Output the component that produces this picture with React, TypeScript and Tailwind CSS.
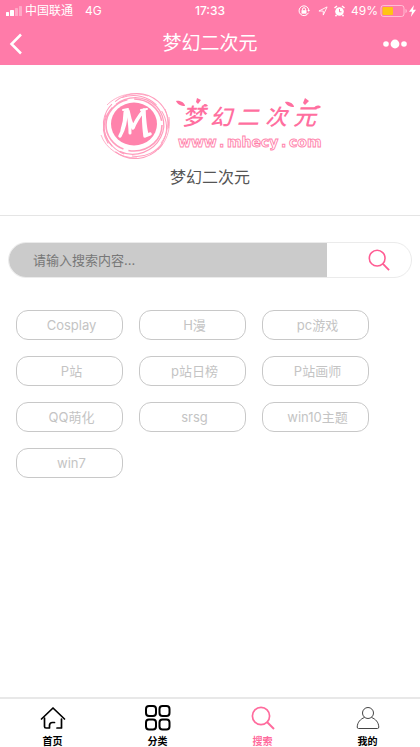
import React from 'react';

const tags = ['Cosplay', 'H漫', 'pc游戏', 'P站', 'p站日榜', 'P站画师', 'QQ萌化', 'srsg', 'win10主题', 'win7'];

function StatusBar() {
  return (
    <div className="grid h-[22px] grid-cols-[1fr_auto_1fr] items-center text-xs leading-5">
      <div className="flex items-center pl-1.5">
        <svg width="17" height="10" viewBox="0 0 17 10" fill="#fff" aria-hidden="true">
          <rect x="0" y="6" width="3" height="4" rx="0.6" />
          <rect x="4" y="4" width="4" height="6" rx="0.6" />
          <rect x="9" y="2" width="3" height="8" rx="0.6" opacity="0.35" />
          <rect x="13" y="0" width="3" height="10" rx="0.6" opacity="0.35" />
        </svg>
        <span className="ml-0.5">中国联通</span>
        <span className="ml-3">4G</span>
      </div>
      <span className="font-medium">17:33</span>
      <div className="flex items-center justify-end pr-1">
        <svg className="mr-2" width="12" height="12" viewBox="0 0 12 12" fill="none" stroke="#fff" aria-hidden="true">
          <path d="M10.4 7.8A4.9 4.9 0 1 1 10.8 5" />
          <path d="M9.3 5h2.7l-1.3 1.8z" fill="#fff" stroke="none" />
          <rect x="3.5" y="5.2" width="5" height="3.5" fill="#fff" stroke="none" />
          <path d="M4.5 5.5V4.2a1.5 1.5 0 0 1 3 0v1.3" />
        </svg>
        <svg className="mr-1.5" width="10" height="10" viewBox="0 0 11 11" fill="none" stroke="#fff" strokeLinejoin="round" aria-hidden="true">
          <path d="M1 5.5 10 1 5.8 10V5.6z" />
        </svg>
        <svg className="mr-1.5" width="11" height="12" viewBox="0 0 11 12" fill="none" stroke="#fff" aria-hidden="true">
          <circle cx="5.5" cy="6.5" r="4.3" fill="#fff" stroke="none" />
          <path d="M.5 3 3 1M8 1l2.500 2M2.500 10l-1 1.300M8.500 10l1 1.300" strokeWidth="1.400" />
          <path d="M5.500 4v2.800h2" stroke="#ff7ba9" />
        </svg>
        <span>49%</span>
        <svg className="ml-0.5" width="27" height="12" viewBox="0 0 27 12" fill="none" aria-hidden="true">
          <rect x="1" y="0.5" width="23" height="11" rx="2.5" stroke="#fff" opacity="0.5" />
          <rect x="2.5" y="2" width="10.5" height="8" rx="1" fill="#ffc414" />
          <path d="M25.5 4v4c1-.4 1.3-1 1.3-2s-.3-1.600-1.300-2z" fill="#fff" opacity="0.5" />
        </svg>
        <svg className="ml-0.5" width="7" height="12" viewBox="0 0 7 12" fill="#fff" aria-hidden="true">
          <path d="M5 0 0 6.700h3L1.800 12 7 4.800H4z" />
        </svg>
      </div>
    </div>
  );
}

function Logo() {
  return (
    <svg className="h-[70px] w-60" viewBox="0 0 240 70" role="img" aria-label="梦幻二次元 www.mhecy.com">
      <g fill="none" stroke="#ff9dbd">
        <ellipse cx="44" cy="34" rx="28" ry="26" strokeWidth="1.600" strokeDasharray="48 5 67 7 38 4" />
        <ellipse cx="44" cy="35" rx="30" ry="28" strokeWidth="1.200" strokeDasharray="70 9 43 5" transform="rotate(-20 44 35)" />
        <ellipse cx="45" cy="35" rx="32" ry="30" strokeWidth="1" strokeDasharray="37 8 61 12" transform="rotate(28 45 35)" />
        <ellipse cx="46" cy="35" rx="33" ry="32" strokeWidth="1" strokeDasharray="30 16 54 11" transform="rotate(-48 46 35)" />
        <path d="M11 44c5 14 19 23 36 23M17 14C27 4 42 0 58 5M79 26c2 13-3 25-11 33M75 18c5 13 3 25-4 34" strokeWidth="0.800" />
      </g>
      <ellipse cx="44" cy="33" rx="23" ry="21.500" fill="#ff83ac" />
      <g fill="none" stroke="#fff" strokeLinejoin="round" strokeLinecap="round">
        <path d="M30 45c4-7 6-16 6-25l2 0c1 6 3 12 5 17 3-8 7-13 11-18-1 9 0 18 1 26l5-2" strokeWidth="3.500" />
        <path d="M35 21c0 6-1 12-3 18M38 22c1 6 2 13 2 20M54 21c1 8 1 15 3 22" strokeWidth="3" />
        <path d="M33 19l5-1M51 19l6-1" strokeWidth="2" />
      </g>
      <g fontWeight="500" fill="#ff6f9f" className="font-['Noto_Sans_CJK_SC',sans-serif] italic">
        <text x="92" y="34" fontSize="23">梦</text>
        <text x="120" y="34" fontSize="22">幻</text>
        <text x="147" y="34" fontSize="22">二</text>
        <text x="175" y="34" fontSize="22">次</text>
        <text x="203" y="34" fontSize="23">元</text>
      </g>
      <g fill="#ff6f9f">
        <path d="M86 10c4-1 9 2 9 5-4 0-8-2-9-5zM107 7l4 2-3 4-2-2zM113 15c1-3 4-2 5 0-2 1-4 1-5 0z" />
        <path d="M195 11c4-1 9 2 9 5-4 0-8-2-9-5zM215 7l4 3-4 4-2-2zM224 17c2-3 5-3 7-1-2 2-5 2-7 1z" />
      </g>
      <g fontSize="14" fontWeight="700" fill="#fff" stroke="#ff83ac" strokeWidth="0.9" className="font-['DejaVu_Sans',sans-serif]">
        <text x="88" y="56">www</text>
        <text x="129" y="56">.</text>
        <text x="137" y="56">mhecy</text>
        <text x="191" y="56">.</text>
        <text x="199" y="56">com</text>
      </g>
    </svg>
  );
}

function SearchIcon({ size }: { size: number }) {
  return (
    <svg width={size} height={size} viewBox="0 0 24 24" fill="none" stroke="currentColor" strokeWidth="1.700" aria-hidden="true">
      <circle cx="10" cy="10" r="8.600" />
      <path d="m16 16 7 7" strokeWidth="2" />
    </svg>
  );
}

function HomeIcon() {
  return (
    <svg width="26" height="24" viewBox="0 0 26 24" fill="none" stroke="currentColor" strokeWidth="1.700" strokeLinecap="round" strokeLinejoin="round" aria-hidden="true">
      <path d="M1.500 13 13 2l11.500 11" />
      <path d="M4.500 12v8.500q0 1.500 1.500 1.500h3.500v-2.500q0-3 3-3h2M17 22h4.500v-9" />
    </svg>
  );
}

function GridIcon() {
  return (
    <svg width="26" height="26" viewBox="0 0 26 26" fill="none" stroke="currentColor" strokeWidth="2" aria-hidden="true">
      <rect x="1" y="1" width="10" height="10" rx="3" />
      <rect x="14.500" y="1" width="10" height="10" rx="3" />
      <rect x="1" y="14.500" width="10" height="10" rx="3" />
      <rect x="14.500" y="14.500" width="10" height="10" rx="3" />
    </svg>
  );
}

function UserIcon() {
  return (
    <svg width="24" height="24" viewBox="0 0 24 24" fill="none" stroke="#444" strokeWidth="1" aria-hidden="true">
      <circle cx="12" cy="7" r="5.500" />
      <path d="M8.500 11.500C4.500 13 1.500 16 1.200 21q0 1.500 1.300 1.500h19q1.300 0 1.300-1.500C22.500 16 19.500 13 15.500 11.500" />
    </svg>
  );
}

const tabs = [
  { label: '首页', icon: <HomeIcon /> },
  { label: '分类', icon: <GridIcon /> },
  { label: '搜索', icon: <SearchIcon size={24} />, active: true },
  { label: '我的', icon: <UserIcon /> },
];

export default function App() {
  return (
    <div className="flex min-h-screen flex-col bg-white font-[Inter,'Noto_Sans_CJK_SC',sans-serif]">
      <header className="bg-[#ff7ba9] text-white">
        <StatusBar />
        <div className="grid h-[43px] grid-cols-[1fr_auto_1fr] items-center">
          <button type="button" aria-label="返回" className="justify-self-start pl-2">
            <svg width="16" height="22" viewBox="0 0 16 22" fill="none" stroke="#fff" strokeWidth="2.500" aria-hidden="true">
              <path d="m13 1.500-9.500 9.500 9.500 9.500" />
            </svg>
          </button>
          <h1 className="text-[19px] leading-6">梦幻二次元</h1>
          <button type="button" aria-label="更多" className="justify-self-end pr-3">
            <svg width="26" height="10" viewBox="0 0 26 10" fill="#fff" aria-hidden="true">
              <circle cx="4" cy="5" r="2.800" />
              <circle cx="13" cy="5" r="4.400" />
              <circle cx="22" cy="5" r="2.800" />
            </svg>
          </button>
        </div>
      </header>

      <main className="flex-1">
        <section className="flex flex-col items-center border-b border-[#e5e5e5] pt-[26px] pb-[26px]">
          <Logo />
          <p className="mt-1 text-base leading-6 text-[#555]">梦幻二次元</p>
        </section>

        <form className="mx-2 mt-[26px] flex h-9 overflow-hidden rounded-full border border-[#ebebeb]" onSubmit={(e) => e.preventDefault()}>
          <input
            type="text"
            aria-label="搜索内容"
            placeholder="请输入搜索内容..."
            className="min-w-0 flex-1 bg-[#cbcbcb] pt-0.5 pl-6 text-[13px] text-[#555] outline-none placeholder:text-[#777]"
          />
          <button type="submit" aria-label="搜索" className="flex w-[84px] items-center justify-center pl-5 text-[#ff5c93]">
            <SearchIcon size={22} />
          </button>
        </form>

        <div className="mt-8 flex flex-wrap gap-4 px-4">
          {tags.map((tag) => (
            <button key={tag} type="button" className="h-[30px] w-[107px] rounded-xl border border-[#c8c8c8] pl-1 text-[13px] leading-5 text-[#c4c4c4]">
              {tag}
            </button>
          ))}
        </div>
      </main>

      <nav className="grid grid-cols-4 border-t-2 border-[#e8e8e8]">
        {tabs.map((tab) => (
          <a key={tab.label} href="#" className={tab.active ? 'flex flex-col items-center text-[#ff6b9d]' : 'flex flex-col items-center text-black'}>
            <span className="flex h-9 items-center pt-0.5">{tab.icon}</span>
            <span className="text-[10px] leading-3 font-bold">{tab.label}</span>
          </a>
        ))}
      </nav>
    </div>
  );
}
